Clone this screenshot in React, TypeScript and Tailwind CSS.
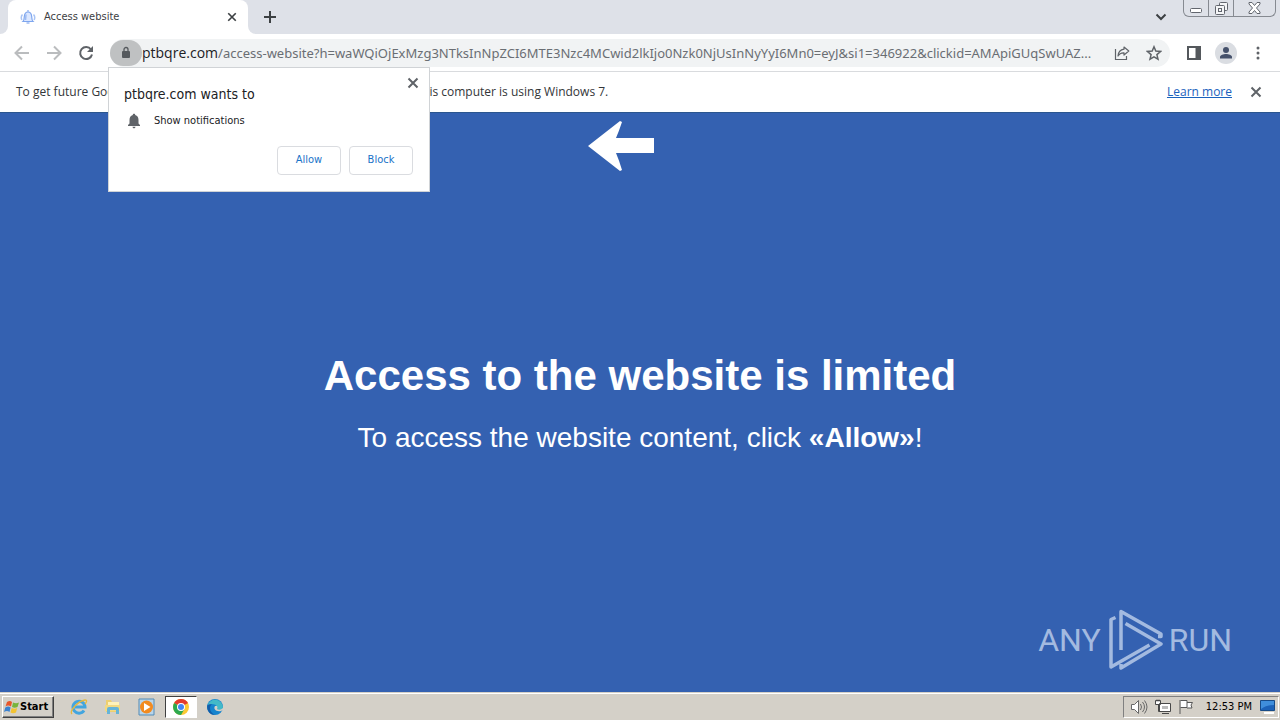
import { useState } from 'react';
import type { ReactNode } from 'react';

const uiFont = "font-['DejaVu_Sans_Condensed','Noto_Sans',sans-serif]";
const lightUiFont = "font-['Open_Sans','Noto_Sans',sans-serif]";

function CloseIcon({ className }: { className: string }) {
  return (
    <svg viewBox="0 0 12 12" className={className} fill="none" stroke="currentColor" strokeWidth="2">
      <path d="M1.5 1.5l9 9M10.5 1.5l-9 9" />
    </svg>
  );
}

function TabStrip() {
  return (
    <div className="flex h-[34px] bg-[#dee1e8]">
      <div className="w-2 bg-white">
        <div className="h-full rounded-br-lg bg-[#dee1e8]" />
      </div>
      <div className="flex w-60 items-center rounded-t-lg bg-white pr-2 pl-3">
        <svg viewBox="0 0 16 16" className="h-4 w-4" fill="none">
          <path d="M3 12.500c1.400-1.300 1-3 1.300-5C4.600 4.600 6 3 8 3s3.400 1.600 3.700 4.500c.3 2-.1 3.700 1.300 5z" fill="#dbe7ff" stroke="#7ea6ee" strokeWidth="1.200" />
          <path d="M8 1v2M6.500 14h3M6 5.500 5.500 11" stroke="#9dbbf2" strokeWidth="1.500" />
          <path d="M2.500 5.500C1 7 1 9 1.800 11M13.500 5.500C15 7 15 9 14.200 11" stroke="#a9c4f5" strokeWidth="1.500" />
        </svg>
        <span className="ml-2 flex-1 text-[11px] text-[#3c4043]">Access website</span>
        <button aria-label="Close tab" className="flex h-4 w-4 items-center justify-center text-[#3c4043]">
          <CloseIcon className="h-[10px] w-[10px]" />
        </button>
      </div>
      <div className="w-2 bg-white">
        <div className="h-full rounded-bl-lg bg-[#dee1e8]" />
      </div>
      <button aria-label="New tab" className="flex w-7 items-center justify-center text-[#3c4043]">
        <svg viewBox="0 0 12 12" className="h-3 w-3" stroke="currentColor" strokeWidth="2">
          <path d="M6 0v12M0 6h12" />
        </svg>
      </button>
      <button aria-label="Search tabs" className="mr-2.5 ml-auto flex w-6 items-center justify-center text-[#3c4043]">
        <svg viewBox="0 0 12 8" className="h-2 w-3" fill="none" stroke="currentColor" strokeWidth="2">
          <path d="M1.500 1.500 6 6l4.500-4.500" />
        </svg>
      </button>
      <div className="mr-1 flex h-[17px] rounded-b-md border border-t-0 border-[#868a91] text-[#62666e]">
        <button aria-label="Minimize" className="flex w-[25px] items-end justify-center border-r border-[#868a91] pb-[3px]">
          <svg viewBox="0 0 12 5" className="h-[5px] w-3" fill="#fff" stroke="currentColor">
            <rect x=".5" y=".5" width="11" height="4" rx="1" />
          </svg>
        </button>
        <button aria-label="Restore" className="flex w-[25px] items-center justify-center border-r border-[#868a91]">
          <svg viewBox="0 0 13 13" className="h-[13px] w-[13px]" fill="#f4f5f7" stroke="currentColor">
            <rect x="4.500" y=".5" width="8" height="8" rx="1" />
            <rect x=".5" y="3.500" width="9" height="9" rx="1" />
            <rect x="3.500" y="6.500" width="3" height="3" />
          </svg>
        </button>
        <button aria-label="Close" className="flex w-[41px] items-center justify-center">
          <svg viewBox="0 0 13 12" className="h-3 w-[13px]" fill="#fff" stroke="currentColor">
            <path d="M1 .5h3L6.500 3.500 9 .5h3v1.500L8.500 6l3.500 4v1.500H9L6.500 8.500 4 11.500H1V10l3.500-4L1 2z" />
          </svg>
        </button>
      </div>
    </div>
  );
}

function NavButton({ label, color, children }: { label: string; color: string; children: ReactNode }) {
  return (
    <button aria-label={label} className={`flex h-8 w-8 items-center justify-center ${color}`}>
      <svg viewBox="0 0 16 16" className="h-4 w-4" fill="none" stroke="currentColor" strokeWidth="2">
        {children}
      </svg>
    </button>
  );
}

function Toolbar() {
  const [path, setPath] = useState(
    '/access-website?h=waWQiOjExMzg3NTksInNpZCI6MTE3Nzc4MCwid2lkIjo0Nzk0NjUsInNyYyI6Mn0=eyJ&si1=346922&clickid=AMApiGUqSwUAZ...'
  );

  return (
    <div className="flex h-[38px] items-center border-b border-[#d9dbde] bg-white px-1.5">
      <NavButton label="Back" color="text-[#babcbe]">
        <path d="M15 8H2M8 1.500 1.500 8 8 14.500" />
      </NavButton>
      <NavButton label="Forward" color="text-[#babcbe]">
        <path d="M1 8h13M8 1.500 14.500 8 8 14.500" />
      </NavButton>
      <NavButton label="Reload" color="text-[#5f6368]">
        <path d="M13 4.500A6 6 0 1 0 14 9.500" />
        <path d="M15 1v6H9z" fill="currentColor" stroke="none" />
      </NavButton>
      <div className={`ml-2 flex h-7 min-w-0 flex-1 items-center rounded-full bg-[#f1f3f4] ${lightUiFont}`}>
        <button aria-label="View site information" className="flex h-[26px] w-8 shrink-0 items-center justify-center rounded-full bg-[#bfc1c2] text-[#55595d]">
          <svg viewBox="0 0 10 13" className="h-[13px] w-[10px]">
            <rect x="1" y="5" width="8" height="7" rx="1" fill="currentColor" />
            <path d="M3 5V3.500a2 2 0 0 1 4 0V5" fill="none" stroke="currentColor" strokeWidth="1.300" />
          </svg>
        </button>
        <div className="flex min-w-0 flex-1 items-baseline">
          <label htmlFor="address" className="text-[14px] text-[#202124]">ptbqre.com</label>
          <input
            id="address"
            value={path}
            onChange={(e) => setPath(e.target.value)}
            className="min-w-0 flex-1 bg-transparent font-['Noto_Sans','Open_Sans',sans-serif] text-[13px] text-ellipsis text-[#6a6e73] outline-none"
          />
        </div>
        <button aria-label="Share this page" className="flex w-8 shrink-0 justify-center text-[#5f6368]">
          <svg viewBox="0 0 16 16" className="h-4 w-4" fill="none" stroke="currentColor" strokeWidth="1.200">
            <path d="M1.500 4v10.500h11V11" />
            <path d="M10 2l4.800 4L10 10V7.800C7 7.600 5.200 8.800 4 11c.3-3.800 2.300-6.300 6-6.800z" strokeLinejoin="round" />
          </svg>
        </button>
        <button aria-label="Bookmark this tab" className="flex w-8 shrink-0 justify-center text-[#5f6368]">
          <svg viewBox="0 0 16 16" className="h-4 w-4" fill="none" stroke="currentColor" strokeWidth="1.500">
            <path d="M8 1.800l1.800 4.300 4.700.4-3.600 3.100 1.100 4.600L8 11.800l-4 2.400 1.100-4.600L1.500 6.500l4.700-.4z" />
          </svg>
        </button>
      </div>
      <button aria-label="Show side panel" className="ml-2 flex h-8 w-8 items-center justify-center text-[#54585c]">
        <svg viewBox="0 0 14 14" className="h-3.5 w-3.5">
          <rect x="1" y="1" width="12" height="12" fill="none" stroke="currentColor" strokeWidth="2" />
          <path d="M8.500 1H13v12H8.500z" fill="currentColor" />
        </svg>
      </button>
      <button aria-label="You" className="mx-[5px] flex h-[22px] w-[22px] items-center justify-center rounded-full bg-[#dadde2] text-[#45516b]">
        <svg viewBox="0 0 14 14" className="h-3.5 w-3.5" fill="currentColor">
          <circle cx="7" cy="4" r="3" />
          <path d="M1 12.500V11c0-2 3.500-3 6-3s6 1 6 3v1.500z" />
        </svg>
      </button>
      <button aria-label="Customize and control" className="flex h-8 w-8 items-center justify-center text-[#5f6368]">
        <svg viewBox="0 0 4 14" className="h-3.5 w-1" fill="currentColor">
          <circle cx="2" cy="2" r="1.500" />
          <circle cx="2" cy="7" r="1.500" />
          <circle cx="2" cy="12" r="1.500" />
        </svg>
      </button>
    </div>
  );
}

function PermissionPrompt() {
  return (
    <div role="dialog" aria-label="ptbqre.com wants to" className="absolute top-[67px] left-[108px] z-10 w-[322px] border border-[#d0d3d6] bg-white pt-[7px] pr-4 pb-4 pl-[15px]">
      <div className="flex items-start justify-between">
        <h2 className="pt-2.5 text-[14px] leading-[18px] text-[#202124]">ptbqre.com wants to</h2>
        <button aria-label="Dismiss" className="-mr-2 flex h-4 w-4 items-center justify-center text-[#5f6368]">
          <CloseIcon className="h-3 w-3" />
        </button>
      </div>
      <div className="mt-2 flex h-5 items-center">
        <svg viewBox="0 0 14 16" className="ml-[3px] h-4 w-3.5" fill="#5f6368">
          <path d="M7 .8c.8 0 1.200.5 1.200 1.200C10.500 2.600 11.500 4.500 11.500 7v3.500L13 12v1H1v-1l1.500-1.500V7c0-2.500 1-4.400 3.300-5C5.800 1.300 6.200.8 7 .8zM5.500 13.800h3c0 .9-.6 1.500-1.500 1.500s-1.500-.6-1.500-1.500z" />
        </svg>
        <span className="ml-[13px] text-[11px] text-[#202124]">Show notifications</span>
      </div>
      <div className="mt-[15px] flex justify-end gap-2 text-[11px] text-[#1a73c8]">
        <button className="h-[29px] w-16 rounded border border-[#dadce0]">Allow</button>
        <button className="h-[29px] w-16 rounded border border-[#dadce0]">Block</button>
      </div>
    </div>
  );
}

function InfoBar() {
  return (
    <div className={`flex h-[41px] items-center border-b border-[#2b568f] bg-white px-4 text-[12px] text-[#333639] ${lightUiFont}`}>
      <p className="flex-1 whitespace-nowrap">
        To get future Google Chrome updates, you'll need Windows 10 or later. This computer is using Windows 7.
      </p>
      <a href="#learn-more" className="text-[#1a62bd] underline">Learn more</a>
      <button aria-label="Close infobar" className="ml-4 flex h-4 w-4 items-center justify-center text-[#5f6368]">
        <CloseIcon className="h-3 w-3" />
      </button>
    </div>
  );
}

function Watermark() {
  return (
    <div className="absolute right-12 bottom-5 flex items-center gap-1.5 font-[Roboto,sans-serif] text-[32px] text-[#a3bae0]">
      <span>ANY</span>
      <svg viewBox="0 0 56 64" className="h-16 w-14" fill="none" stroke="currentColor" strokeWidth="3.500" strokeLinejoin="round">
        <path d="M8.500 9.500 4 11.500V59l38.500-22" />
        <path d="M14 42V3.500L54 26v2.500H51" />
        <path d="M18.500 15.500 54 36 14 60V56" />
      </svg>
      <span>RUN</span>
    </div>
  );
}

function BlockedPage() {
  return (
    <main className="relative flex flex-1 flex-col items-center bg-[#3461b1] pt-[7px] font-['Liberation_Sans',Arial,sans-serif] text-white">
      <svg viewBox="0 0 66 52" className="-ml-[38px] h-[52px] w-[66px]" fill="#fff">
        <path d="M0 26 32 1l2 1q-3 9-6 16h38v15H28q3 7 6 17l-2 1z" />
      </svg>
      <h1 className="mt-[178px] text-[42px] leading-[52px] font-bold">Access to the website is limited</h1>
      <p className="mt-5 text-[28px] leading-8">
        To access the website content, click <b>«Allow»</b>!
      </p>
      <Watermark />
    </main>
  );
}

function ExplorerIcon() {
  return (
    <svg viewBox="0 0 18 18" className="h-[18px] w-[18px]" fill="none">
      <path d="M14 12.500A6 6 0 1 1 15 9H5" stroke="#42a5df" strokeWidth="3" />
      <path d="M2 16C-1 13 8 3 15 2c3 0 1 3 0 4" stroke="#e6b83c" strokeWidth="1.300" />
    </svg>
  );
}

function FolderIcon() {
  return (
    <svg viewBox="0 0 18 18" className="h-[18px] w-[18px]">
      <path d="M2 2h5l1 2h7v10H2z" fill="#edcf70" />
      <path d="M4 4h11v6H4z" fill="#fff2b9" />
      <path d="M1 7h15v6H1z" fill="#f2d982" />
      <path d="M3 16v-5q0-2 2-2h8q2 0 2 2v5h-3v-4H6v4z" fill="#66b4d8" />
    </svg>
  );
}

function PlayerIcon() {
  return (
    <svg viewBox="0 0 18 18" className="h-[18px] w-[18px]">
      <path d="M1 1h15v16H1z" fill="#b9d5ea" stroke="#528bb6" />
      <circle cx="8.500" cy="9" r="6.500" fill="#f28b20" />
      <path d="M6 5v8l6.500-4z" fill="#fff" />
    </svg>
  );
}

function ChromeIcon() {
  return (
    <svg viewBox="0 0 18 18" className="h-[18px] w-[18px]">
      <circle cx="9" cy="9" r="8" fill="#fcc934" />
      <path d="M9 9 2.100 5A8 8 0 0 1 16 5z" fill="#e33b2e" />
      <path d="M2.100 5A8 8 0 0 0 9 17l3.500-6L9 9z" fill="#2da94f" />
      <circle cx="9" cy="9" r="4" fill="#fff" />
      <circle cx="9" cy="9" r="3" fill="#4285f4" />
    </svg>
  );
}

function EdgeIcon() {
  return (
    <svg viewBox="0 0 18 18" className="h-[18px] w-[18px]">
      <circle cx="9" cy="9" r="8" fill="#1684ce" />
      <path d="M1.500 7A8 8 0 0 1 17 9c0 3-4 4-6 2 1-2-1-5-5-5q-3 0-4.500 1z" fill="#43b9c8" />
      <path d="M6 6c-3 2-3 8 3 11-5 0-9-5-7.500-10z" fill="#125da9" />
      <path d="M9 8c-2 3 1 6 6 5l2-1v-2q-3 3-6 1 1-1 0-3z" fill="#d4d0c8" />
    </svg>
  );
}

const quickLaunch = [
  { name: 'Internet Explorer', icon: <ExplorerIcon />, active: false },
  { name: 'Windows Explorer', icon: <FolderIcon />, active: false },
  { name: 'Media Player', icon: <PlayerIcon />, active: false },
  { name: 'Google Chrome', icon: <ChromeIcon />, active: true },
  { name: 'Microsoft Edge', icon: <EdgeIcon />, active: false },
];

function Taskbar() {
  return (
    <footer className="flex h-7 items-center border-t border-[#d4d0c8] bg-[#d4d0c8] pt-px pr-px pl-0.5 shadow-[inset_0_1px_0_#fff]">
      <button className="flex h-[22px] w-[52px] items-center border border-t-white border-r-[#404040] border-b-[#404040] border-l-white pl-px text-[11px] font-bold text-black shadow-[inset_-1px_-1px_0_#808080]">
        <svg viewBox="0 0 16 16" className="h-4 w-4">
          <path d="M3 3q3-2 5 0L7 7.500q-3-2-5.500 0z" fill="#e8562a" />
          <path d="M9 3.500q3 1.500 6 0L13.500 8q-3 1.500-5.500 0z" fill="#78b43c" />
          <path d="M1.300 8.500q3-2 5.300 0L5.500 13Q3 11 0 13z" fill="#3b82d0" />
          <path d="M7.700 9q3 1.500 5.500 0L12 13.500q-3 1.500-5.500 0z" fill="#f3c331" />
        </svg>
        Start
      </button>
      <div className="ml-[9px] flex gap-0.5">
        {quickLaunch.map((item) => (
          <button
            key={item.name}
            aria-label={item.name}
            className={`flex h-[22px] w-8 items-center justify-center border ${
              item.active ? 'border-t-[#404040] border-r-white border-b-white border-l-[#404040] bg-white' : 'border-transparent'
            }`}
          >
            {item.icon}
          </button>
        ))}
      </div>
      <div className="ml-auto flex h-[22px] items-center border border-t-[#808080] border-r-white border-b-white border-l-[#808080] pr-0.5 pl-1.5 text-[11px] text-black">
        <svg viewBox="0 0 18 16" className="h-4 w-[18px]" fill="#fff" stroke="#686868">
          <path d="M1.500 5.500h3l4-4v13l-4-4h-3z" />
          <path d="M10.500 5q2 3 0 6M12.500 3q4 5 0 10M14.500 1.500q5 6.500 0 13" fill="none" />
        </svg>
        <svg viewBox="0 0 18 16" className="ml-1.5 h-4 w-[18px]" fill="#fff" stroke="#484848">
          <path d="M5.500 4.500h11v8h-11zM8 14.500h7M1.500 1.500h5v4h-5zM3 .5v2M5 .5v2" />
          <path d="M4.500 6v6.500h3" fill="none" />
          <path d="M8 7h6v3H8z" fill="#bbb" stroke="none" />
        </svg>
        <svg viewBox="0 0 16 16" className="ml-1.5 h-4 w-4" fill="#fff" stroke="#585858">
          <path d="M2 1v14M2.500 1.500H9v7H2.500M9 3.500h5.500L13 6l1 3H9" />
        </svg>
        <time className="ml-3 whitespace-nowrap">12:53 PM</time>
        <svg viewBox="0 0 16 14" className="ml-2 h-3.5 w-4">
          <path d="M.5.5h14v10H.5z" fill="#1c62b8" stroke="#174b87" />
          <path d="M1 1h13v4Q6 5 1 9z" fill="#3f8edb" />
          <path d="M4 13h10" stroke="#fff" strokeWidth="2" />
        </svg>
      </div>
    </footer>
  );
}

export default function App() {
  return (
    <div className={`relative flex min-h-screen flex-col overflow-hidden ${uiFont}`}>
      <TabStrip />
      <Toolbar />
      <InfoBar />
      <PermissionPrompt />
      <BlockedPage />
      <Taskbar />
    </div>
  );
}
